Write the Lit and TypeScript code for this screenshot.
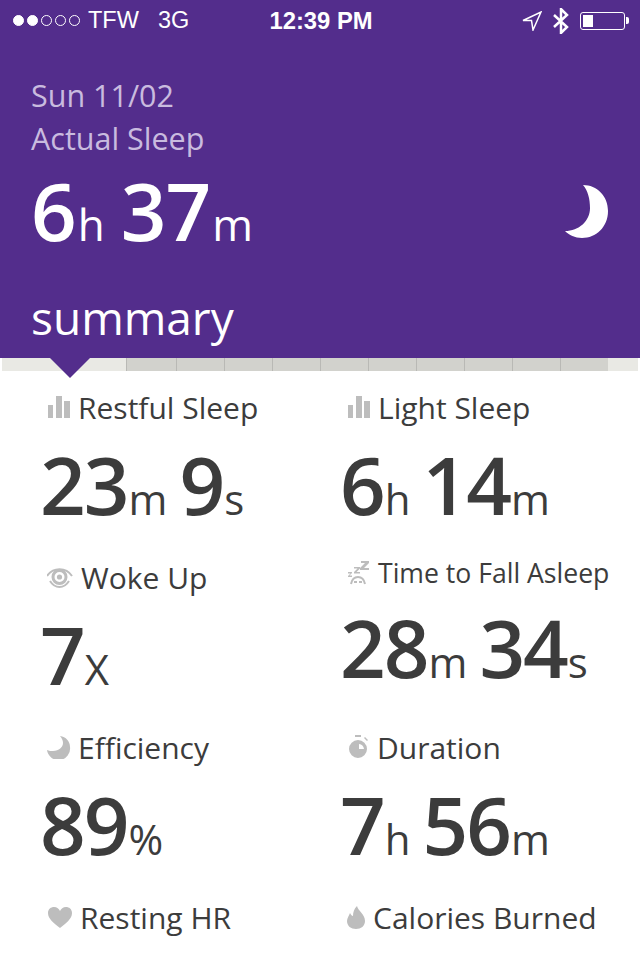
import {html, css, LitElement, svg} from 'lit';
import {customElement} from 'lit/decorators.js';

const icons: Record<string, unknown> = {
  bars: svg`<path d="M1 9h5v13H1zM9 0h6v22H9zM17 5h6v17h-6z"/>`,
  eye: svg`<g fill="none" stroke="#bdbdbd"><path stroke-width="2" d="M0 11C6 2 19 2 25 11"/><path stroke-width="2" d="M3 16C8 24 17 24 22 16"/><circle cx="12.500" cy="12" r="6.500" stroke-width="3"/></g><circle cx="12.500" cy="12" r="2.600"/>`,
  zzz: svg`<path d="M14 0h8v2l-5 5h5v2H13V7l5-5h-4zM7 6h6v1.500L9.500 11H13v1.500H7V11l3.500-3.500H7zM1 11h4v1l-2.500 2.500H5V16H1v-1l2.500-2.500H1z"/><path fill="none" stroke="#bdbdbd" stroke-width="2" d="M4 23c1-5 4-7 7-7s6 2 7 7"/><path d="M7 20h3v2H7zM12 20h3v2h-3z"/>`,
  moon: svg`<path d="M13 0c6 1 10 5 10 11a11.500 11.500 0 0 1-23 3c2 1 4 1 6 1 6 0 10-4 10-8 0-2-1-5-3-7z"/>`,
  timer: svg`<path fill-rule="evenodd" d="M11 5a9 9 0 1 1 0 18 9 9 0 0 1 0-18zm1 4v5h5a6 6 0 0 0-5-5z"/><path d="M8 0h6v2H8zM18 2l3 3-1 1-3-3z"/>`,
  heart: svg`<path d="M13 22C7 17 1 13 1 7c0-4 3-6 6-6 3 0 5 2 6 4 1-2 3-4 6-4 3 0 6 2 6 6 0 6-6 10-12 15z"/>`,
  flame: svg`<path d="M10 0C11 5 18 8 18 15C18 20 14 23 9 23C4 23 0 20 0 15C0 12 2 10 3 7C4 9 5 10 6 10C6 6 7 3 10 0z"/>`,
};

const metrics = [
  {icon: 'bars', w: 24, h: 22, label: 'Restful Sleep', parts: [['23', 'm'], ['9', 's']]},
  {icon: 'bars', w: 24, h: 22, label: 'Light Sleep', parts: [['6', 'h'], ['14', 'm']]},
  {icon: 'eye', w: 27, h: 24, label: 'Woke Up', parts: [['7', 'X']]},
  {icon: 'zzz', w: 24, h: 24, label: 'Time to Fall Asleep', parts: [['28', 'm'], ['34', 's']], raised: true},
  {icon: 'moon', w: 24, h: 23, label: 'Efficiency', parts: [['89', '%']]},
  {icon: 'timer', w: 23, h: 24, label: 'Duration', parts: [['7', 'h'], ['56', 'm']]},
  {icon: 'heart', w: 26, h: 23, label: 'Resting HR', parts: []},
  {icon: 'flame', w: 19, h: 23, label: 'Calories Burned', parts: []},
];

@customElement('app-root')
export class AppRoot extends LitElement {
  static styles = css`
    :host {
      display: block;
      width: 640px;
      height: 960px;
      overflow: hidden;
      background: #fff;
      font-family: "Open Sans", "Noto Sans", sans-serif;
      color: #3c3c3c;
    }
    .header {
      height: 358px;
      box-sizing: border-box;
      background: #532d8c;
      color: #fff;
      display: flex;
      flex-direction: column;
    }
    .status {
      height: 40px;
      box-sizing: border-box;
      padding: 1px 11px 0 13px;
      display: grid;
      grid-template-columns: 1fr auto 1fr;
      align-items: center;
      font-family: "Liberation Sans", sans-serif;
      font-size: 23.5px;
    }
    .status-left { display: flex; align-items: center; }
    .dots { display: flex; gap: 3px; margin-right: 8px; }
    .dot { width: 9px; height: 9px; border: 1px solid #fff; border-radius: 50%; }
    .dot.on { background: #fff; }
    .net { margin-left: 19px; }
    .time { font-weight: 700; font-size: 23.8px; }
    .status-right { display: flex; align-items: center; justify-content: flex-end; gap: 11px; }
    .battery { display: flex; align-items: center; gap: 1px; }
    .battery-body {
      width: 45px;
      height: 18px;
      box-sizing: border-box;
      border: 1px solid #fff;
      border-radius: 3px;
      padding: 2px;
    }
    .battery-fill { width: 10px; height: 100%; background: #fff; }
    .battery-tip { width: 3px; height: 7px; background: #fff; border-radius: 0 2px 2px 0; }
    .head-main {
      flex: 1;
      padding: 34px 31px 0 31px;
      display: flex;
      flex-direction: column;
    }
    .sub { font-size: 30.5px; line-height: 43px; color: #c9bbdf; }
    .total { display: flex; align-items: center; justify-content: space-between; margin-top: 6px; }
    .total svg { margin-top: 3px; }
    .total .num { font-size: 80px; font-weight: 600; color: #fff; letter-spacing: -1px; }
    .total .unit { font-size: 44px; font-weight: 400; color: #fff; margin-right: 16px; margin-left: 2px; }
    .total-val { line-height: 88px; height: 88px; white-space: nowrap; }
    .summary { font-size: 46px; line-height: 60px; margin-top: 33px; }

    .timeline { position: relative; height: 13px; margin: 0 2px; background: #e9e9e4; }
    .track {
      display: grid;
      grid-template-columns: 50px repeat(9, 48px);
      margin-left: 124px;
      width: 482px;
      height: 100%;
      background: #d2d2cd;
    }
    .seg { border-left: 1px solid #b9b9b5; }
    .pointer {
      position: absolute;
      left: 48px;
      top: 0;
      width: 0;
      height: 0;
      border-left: 20px solid transparent;
      border-right: 20px solid transparent;
      border-top: 20px solid #532d8c;
    }

    .grid {
      display: grid;
      grid-template-columns: 300px 1fr;
      grid-auto-rows: 170px;
      padding: 10px 0 0 40px;
    }
    .metric { display: flex; flex-direction: column; }
    .label {
      display: flex;
      align-items: center;
      gap: 7px;
      height: 52px;
      padding-left: 7px;
      font-size: 30px;
      white-space: nowrap;
    }
    .label svg { fill: #bdbdbd; flex: none; }
    .metric.raised .label { height: 30px; margin-top: 7px; font-size: 26.6px; }
    .value { line-height: 88px; height: 88px; margin-top: 7px; white-space: nowrap; }
    .metric.raised .value { margin-top: 15px; }
    .value .num { font-size: 80px; font-weight: 600; letter-spacing: -2px; }
    .value .unit { font-size: 42px; margin: 0 12px 0 1px; }
  `;

  render() {
    return html`
      <div class="header">
        <div class="status">
          <div class="status-left">
            <div class="dots">
              ${[1, 1, 0, 0, 0].map(on => html`<span class="dot ${on ? 'on' : ''}"></span>`)}
            </div>
            <span>TFW</span><span class="net">3G</span>
          </div>
          <div class="time">12:39 PM</div>
          <div class="status-right">
            <svg width="20" height="20" viewBox="0 0 20 20" fill="none" stroke="#fff" stroke-width="1.500"><path d="M1 9.500 19 1l-8 18-1.500-9.500z"/></svg>
            <svg width="16" height="26" viewBox="0 0 16 26" fill="none" stroke="#fff" stroke-width="2.500"><path d="M1 7l13 12-6 6V1l6 6L1 19"/></svg>
            <div class="battery">
              <div class="battery-body"><div class="battery-fill"></div></div>
              <div class="battery-tip"></div>
            </div>
          </div>
        </div>
        <div class="head-main">
          <div class="sub">Sun 11/02</div>
          <div class="sub">Actual Sleep</div>
          <div class="total">
            <div class="total-val">
              <span class="num">6</span><span class="unit">h</span><span class="num">37</span><span class="unit">m</span>
            </div>
            <svg width="44" height="54" viewBox="0 0 44 54"><path fill="#fff" d="M18 0C32 0 43 11 43 26C43 42 31 53 17 53C10 53 4 50 0 46C14 46 25 36 25 23C25 14 23 6 18 0Z"/></svg>
          </div>
          <div class="summary">summary</div>
        </div>
      </div>
      <div class="timeline">
        <div class="track">${Array.from({length: 10}, () => html`<span class="seg"></span>`)}</div>
        <div class="pointer"></div>
      </div>
      <div class="grid">
        ${metrics.map(m => html`
          <div class="metric ${m.raised ? 'raised' : ''}">
            <div class="label">
              <svg width=${m.w} height=${m.h} viewBox="0 0 ${m.w} ${m.h}">${icons[m.icon]}</svg>
              <span>${m.label}</span>
            </div>
            <div class="value">
              ${m.parts.map(p => html`<span class="num">${p[0]}</span><span class="unit">${p[1]}</span>`)}
            </div>
          </div>
        `)}
      </div>
    `;
  }
}
